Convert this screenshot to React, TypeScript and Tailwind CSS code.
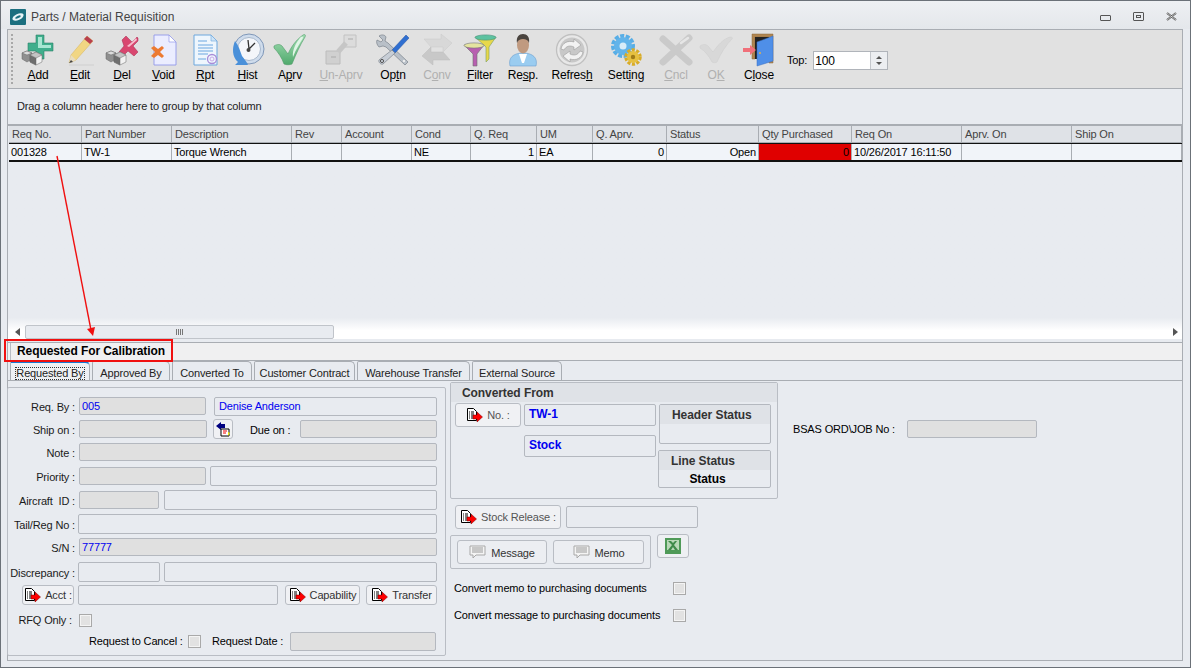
const font = "font-['Liberation_Sans',sans-serif]";

type IconName =
  | 'add' | 'edit' | 'del' | 'void' | 'rpt' | 'hist' | 'aprv' | 'unaprv' | 'optn'
  | 'conv' | 'filter' | 'resp' | 'refresh' | 'setting' | 'cncl' | 'ok' | 'close';

function Blocks() {
  return (
    <g stroke="#666" strokeWidth="0.5">
      <path d="M1 20l5-2 5 2v6l-5 3-5-3z" fill="#8f8f8f" />
      <path d="M1 20l5 2 5-2-5-2z" fill="#dcdcdc" />
      <path d="M9 22l6-3 6 3v7l-6 3-6-3z" fill="#f2f2f2" />
      <path d="M15 25v7l-6-3v-7z" fill="#6e6e6e" />
      <path d="M9 22l6 3 6-3-6-3z" fill="#c4c4c4" />
    </g>
  );
}

function ToolIcon({ name }: { name: IconName }) {
  const common = { width: 34, height: 34, viewBox: '0 0 34 34' };
  switch (name) {
    case 'add':
      return (
        <svg {...common}>
          <path d="M15 2h8v8h9v8h-9v8h-8v-8H7v-8h8z" fill="#3fae8c" stroke="#2b7f68" strokeWidth="0.6" strokeLinejoin="round" />
          <path d="M17 4h4v8h9v3H17z" fill="#a8e6d2" />
          <Blocks />
        </svg>
      );
    case 'edit':
      return (
        <svg {...common}>
          <path d="M24 3l6 5-17 19-7 3 2-8z" fill="#f1d683" stroke="#d4b25c" strokeWidth="0.5" />
          <path d="M24 3l6 5-3 3-6-5z" fill="#b8404f" />
          <path d="M8 22l5 5-7 3z" fill="#e8dcc0" />
          <path d="M6 30l2-3 2 2z" fill="#444" />
          <path d="M6 32h25" stroke="#d4d4d4" strokeWidth="1.5" />
        </svg>
      );
    case 'del':
      return (
        <svg {...common}>
          <path d="M17 7l4-4 6 6 5-5 1 1v3l-5 5 5 6-4 4-6-5-5 5-4-4 5-6z" fill="#d9476f" stroke="#a32b50" strokeWidth="0.5" strokeLinejoin="round" />
          <path d="M27 9l4-4 1 2-8 7-2-1z" fill="#f8bccd" />
          <Blocks />
        </svg>
      );
    case 'void':
      return (
        <svg {...common}>
          <path d="M7 2h15l7 7v23H7z" fill="#ebedff" stroke="#9298ea" strokeWidth="0.9" />
          <path d="M22 2v7h7z" fill="#fff" stroke="#9298ea" strokeWidth="0.7" />
          <path d="M4 15l3-2 4 3 4-3 2 2-4 4 4 4-2 2-4-3-4 3-3-2 4-4z" fill="#ec7a32" />
        </svg>
      );
    case 'rpt':
      return (
        <svg {...common}>
          <path d="M6 2h17l6 6v24H6z" fill="#eef6fd" stroke="#6da7dd" />
          <path d="M23 2v6h6z" fill="#cfe4f7" stroke="#6da7dd" strokeWidth="0.6" />
          <path d="M10 8h9M10 12h15M10 15h15M10 18h15M10 21h10M10 26h8" stroke="#6aa6e0" strokeWidth="1" />
          <circle cx="24" cy="26" r="4.500" fill="none" stroke="#a88cd8" strokeWidth="1.300" />
          <circle cx="24" cy="26" r="2" fill="none" stroke="#c9a8e8" />
        </svg>
      );
    case 'hist':
      return (
        <svg {...common}>
          <circle cx="18" cy="16" r="15" fill="#cfdcec" stroke="#7f97b8" />
          <circle cx="18" cy="16" r="11.500" fill="#f4f6fa" stroke="#a8b8cc" />
          <path d="M18 16l-1-9M18 16l6-6" stroke="#333" strokeWidth="1.300" />
          <circle cx="17.500" cy="17" r="2" fill="#444" />
          <path d="M4 8C1 15 1 24 7 29l-3 3h13c-1-3-3-5-6-9-2-5-3-10-7-15z" fill="#4a90d9" />
        </svg>
      );
    case 'aprv':
      return (
        <svg {...common}>
          <defs>
            <linearGradient id="aprvFill" x1="0" y1="0" x2="0" y2="1">
              <stop offset="0" stopColor="#a6e0b6" />
              <stop offset="1" stopColor="#4fa96c" />
            </linearGradient>
          </defs>
          <path d="M1 13c3-2 6-2 8 0l6 8c3-7 8-14 15-19 2-1 3 0 2 2-5 8-9 17-13 27-2 1-6 1-8 0C9 25 5 19 1 15z" fill="url(#aprvFill)" stroke="#4d9a66" strokeWidth="0.6" />
          <path d="M27 5c1-1 3-2 3 0-3 5-7 11-10 19-1-7 3-14 7-19z" fill="#e0f5e6" />
        </svg>
      );
    case 'unaprv':
      return (
        <svg {...common}>
          <path d="M20 2h12v12H20z" fill="#dcdcdc" stroke="#c2c2c2" />
          <path d="M2 18h14v13H2z" fill="#d0d0d0" stroke="#bcbcbc" />
          <path d="M14 19l8-9" stroke="#c6c6c6" strokeWidth="5" />
          <path d="M24 6h5M7 24h5" stroke="#aaa" />
        </svg>
      );
    case 'optn':
      return (
        <svg {...common}>
          <path d="M3 3c3-2 6-1 7 1l-1 4 3 2 20 19-3 3L10 14l-3-1-4 1c-2-2-3-5-2-7l4 2 2-2z" fill="#b9c0c8" stroke="#6d7680" strokeWidth="0.6" />
          <path d="M30 2l3 3-14 15-3-3z" fill="#2f6fd1" stroke="#1f4fa0" strokeWidth="0.5" />
          <path d="M16 17l3 3-12 11c-2 1-5-2-4-4z" fill="#c8ced6" stroke="#6d7680" strokeWidth="0.6" />
          <circle cx="6" cy="28" r="1.600" fill="none" stroke="#555" />
          <circle cx="28" cy="28" r="1.200" fill="#eee" />
        </svg>
      );
    case 'conv':
      return (
        <svg {...common}>
          <path d="M4 6h17V1l11 9-9 9v-5H11z" fill="#d8d8d8" stroke="#cacaca" strokeWidth="0.5" />
          <path d="M30 27H13v5L2 23l9-9v5h12z" fill="#c8c8c8" stroke="#bdbdbd" strokeWidth="0.5" />
        </svg>
      );
    case 'filter':
      return (
        <svg {...common}>
          <path d="M12 4h21l-7 10v12l-3 3V14z" fill="#e8d84a" stroke="#7aa060" strokeWidth="0.6" />
          <ellipse cx="22.500" cy="4.500" rx="10.500" ry="2.600" fill="#5cc2a0" stroke="#3f8f78" strokeWidth="0.6" />
          <path d="M1 12h20l-7 9v12h-4V21z" fill="#b85fb0" stroke="#6f6f6f" strokeWidth="0.6" />
          <ellipse cx="11" cy="12.500" rx="10" ry="2.600" fill="#e4e4a0" stroke="#777" strokeWidth="0.6" />
        </svg>
      );
    case 'resp':
      return (
        <svg {...common}>
          <path d="M4 33c-2-8 3-13 13-13s15 5 13 13z" fill="#9accf0" stroke="#6ba0d0" strokeWidth="0.6" />
          <path d="M13 21h8l-3 9h-2z" fill="#fff" />
          <ellipse cx="17" cy="12" rx="6" ry="8.500" fill="#c09a80" />
          <path d="M11 10c-1-6 2-9 6-9s7 3 6 9c-1-3-3-4-6-4s-5 1-6 4z" fill="#4a443f" />
        </svg>
      );
    case 'refresh':
      return (
        <svg {...common}>
          <circle cx="17" cy="17" r="15.500" fill="#e8e8e8" stroke="#c0c0c0" strokeWidth="1.300" />
          <circle cx="17" cy="17" r="12.500" fill="#c8c8c8" />
          <path d="M6 16c1-6 7-9 13-7V6l7 6-7 5v-3c-4-2-8-1-10 3z" fill="#f2f2f2" stroke="#909090" strokeWidth="0.5" />
          <path d="M28 19c-1 6-7 9-13 7v3l-7-6 7-5v3c4 2 8 1 10-3z" fill="#f2f2f2" stroke="#909090" strokeWidth="0.5" />
        </svg>
      );
    case 'setting':
      return (
        <svg {...common}>
          <circle cx="14" cy="13" r="10" fill="none" stroke="#58aee6" strokeWidth="4" strokeDasharray="4 1.500" />
          <circle cx="14" cy="13" r="9" fill="#62b4ea" />
          <circle cx="14" cy="13" r="3.500" fill="#d8ecf8" />
          <circle cx="24" cy="24" r="7" fill="none" stroke="#d8ac28" strokeWidth="3.500" strokeDasharray="3 1.500" />
          <circle cx="24" cy="24" r="6" fill="#e6c040" />
          <circle cx="24" cy="24" r="2.200" fill="#a07c18" />
        </svg>
      );
    case 'cncl':
      return (
        <svg {...common}>
          <path d="M4 6l26 23M30 5L4 29" stroke="#cacaca" strokeWidth="7" strokeLinecap="round" fill="none" />
          <path d="M22 10l7-5" stroke="#e6e6e6" strokeWidth="2.500" strokeLinecap="round" fill="none" />
        </svg>
      );
    case 'ok':
      return (
        <svg {...common}>
          <path d="M1 13c3-2 6-2 8 0l5 6c5-7 10-13 17-15 2 0 3 1 2 2-6 6-11 14-15 23-1 1-4 1-5 0C10 23 6 18 1 15z" fill="#d8d8d8" stroke="#cccccc" strokeWidth="0.5" />
        </svg>
      );
    case 'close':
      return (
        <svg {...common}>
          <path d="M10 1h21v29h-4V4H13v22h-3z" fill="#b08550" stroke="#8a6a3c" strokeWidth="0.5" />
          <path d="M13 4h14v22H13z" fill="#222" />
          <path d="M15 9l16-6v25l-16 5z" fill="#4f8fe8" stroke="#3a6fc0" strokeWidth="0.5" />
          <circle cx="18" cy="20" r="1" fill="#e0b050" />
          <path d="M1 15h7v-3l6 5-6 5v-3H1z" fill="#f0707a" />
        </svg>
      );
  }
}

function DocArrow() {
  return (
    <svg width="17" height="17" viewBox="0 0 17 17" className="shrink-0">
      <path d="M1.500 1.500h6l3 3v9h-9z" fill="#fff" stroke="#000" />
      <path d="M3 5h1M5 5h3M3 7h1M5 7h3M3 9h1M5 9h3M3 11h1M5 11h3" stroke="#000" />
      <path d="M7 8h4V5l5.500 5-5.500 5v-3H7z" fill="#f00" stroke="#700" strokeWidth="0.5" />
    </svg>
  );
}

function Bubble() {
  return (
    <svg width="17" height="14" viewBox="0 0 17 14" className="shrink-0">
      <path d="M1 1h15v9H7l-3 3v-3H1z" fill="#f4f4f4" stroke="#a8a8a8" />
      <path d="M3 3h11M3 5h11M3 7h11" stroke="#9a9a9a" />
    </svg>
  );
}

const tools: { name: IconName; pre: string; key: string; post: string; w: string; off?: boolean }[] = [
  { name: 'add', pre: '', key: 'A', post: 'dd', w: 'w-[42px]' },
  { name: 'edit', pre: '', key: 'E', post: 'dit', w: 'w-[42px]' },
  { name: 'del', pre: '', key: 'D', post: 'el', w: 'w-[42px]' },
  { name: 'void', pre: '', key: 'V', post: 'oid', w: 'w-[41px]' },
  { name: 'rpt', pre: '', key: 'R', post: 'pt', w: 'w-[42px]' },
  { name: 'hist', pre: '', key: 'H', post: 'ist', w: 'w-[43px]' },
  { name: 'aprv', pre: 'A', key: 'p', post: 'rv', w: 'w-[42px]' },
  { name: 'unaprv', pre: '', key: 'U', post: 'n-Aprv', w: 'w-[60px]', off: true },
  { name: 'optn', pre: 'Op', key: 't', post: 'n', w: 'w-[44px]' },
  { name: 'conv', pre: 'C', key: 'o', post: 'nv', w: 'w-[44px]', off: true },
  { name: 'filter', pre: '', key: 'F', post: 'ilter', w: 'w-[42px]' },
  { name: 'resp', pre: 'Re', key: 's', post: 'p.', w: 'w-[44px]' },
  { name: 'refresh', pre: 'Refres', key: 'h', post: '', w: 'w-[54px]' },
  { name: 'setting', pre: 'Sett', key: 'i', post: 'ng', w: 'w-[54px]' },
  { name: 'cncl', pre: '', key: 'C', post: 'ncl', w: 'w-[46px]', off: true },
  { name: 'ok', pre: 'O', key: 'K', post: '', w: 'w-[34px]', off: true },
  { name: 'close', pre: 'C', key: 'l', post: 'ose', w: 'w-[52px]' },
];

const columns: { label: string; value: string; w: string; right?: boolean; red?: boolean }[] = [
  { label: 'Req No.', value: '001328', w: 'w-[73px]' },
  { label: 'Part Number', value: 'TW-1', w: 'w-[90px]' },
  { label: 'Description', value: 'Torque Wrench', w: 'w-[120px]' },
  { label: 'Rev', value: '', w: 'w-[50px]' },
  { label: 'Account', value: '', w: 'w-[70px]' },
  { label: 'Cond', value: 'NE', w: 'w-[59px]' },
  { label: 'Q. Req', value: '1', w: 'w-[66px]', right: true },
  { label: 'UM', value: 'EA', w: 'w-[56px]' },
  { label: 'Q. Aprv.', value: '0', w: 'w-[74px]', right: true },
  { label: 'Status', value: 'Open', w: 'w-[92px]', right: true },
  { label: 'Qty Purchased', value: '0', w: 'w-[93px]', right: true, red: true },
  { label: 'Req On', value: '10/26/2017 16:11:50', w: 'w-[110px]' },
  { label: 'Aprv. On', value: '', w: 'w-[110px]' },
  { label: 'Ship On', value: '', w: 'w-[110px]' },
];

const tabs = [
  { label: 'Requested By', w: 'w-[80px]', active: true },
  { label: 'Approved By', w: 'w-[78px]' },
  { label: 'Converted To', w: 'w-[80px]' },
  { label: 'Customer Contract', w: 'w-[101px]' },
  { label: 'Warehouse Transfer', w: 'w-[113px]' },
  { label: 'External Source', w: 'w-[90px]' },
];

// grey = read-only box, otherwise it is outlined only
function Field({ w, h = 'h-[18px]', grey, blue, bold, children }: { w: string; h?: string; grey?: boolean; blue?: boolean; bold?: boolean; children?: React.ReactNode }) {
  return (
    <div
      className={`${w} ${h} shrink-0 border border-[#b4b8bf] rounded-[2px] flex items-center text-[11px] leading-none ${grey ? 'bg-[#e0e0e0] pl-[2px]' : 'bg-[#e8ebf0] pl-1'} ${blue ? 'text-[#0000f0]' : 'text-black'} ${bold ? 'font-bold text-[12px] pb-[2px] tracking-[-0.08px]' : ''}`}
    >
      {children}
    </div>
  );
}

function Label({ children }: { children: React.ReactNode }) {
  return <div className="w-[68px] shrink-0 pt-[3px] pr-[1px] text-right text-[11px] leading-none text-[#1a1a1a] whitespace-nowrap">{children}</div>;
}

function IconButton({ w, h = 'h-[22px]', label, grey }: { w: string; h?: string; label: string; grey?: boolean }) {
  return (
    <div className={`${w} ${h} shrink-0 flex items-center justify-center gap-1 rounded-[3px] border border-[#b9bdc4] bg-[#f0f1f4] text-[11px] leading-none ${grey ? 'text-[#555]' : 'text-[#333]'}`}>
      <DocArrow />
      <span className="whitespace-nowrap">{label}</span>
    </div>
  );
}

function Check() {
  return (
    <div className="w-[13px] h-[13px] shrink-0 border border-[#a9a9a9] p-[1px] bg-[#f4f4f4]">
      <div className="w-full h-full bg-[#e2e2e2]" />
    </div>
  );
}

function LeftForm() {
  return (
    <div className="w-[439px] h-[269px] -ml-[1px] mt-[6px] border border-[#b9bdc4] rounded-[2px] pt-[8px] shrink-0">
      <div className="flex items-center h-[20px]">
        <Label>Req. By :</Label>
        <div className="ml-[3px]"><Field w="w-[127px]" grey blue>005</Field></div>
        <div className="ml-2"><Field w="w-[223px]" h="h-[19px]" blue>Denise Anderson</Field></div>
      </div>
      <div className="flex items-center h-[20px] mt-[3px]">
        <Label>Ship on :</Label>
        <div className="ml-[3px]"><Field w="w-[128px]" grey /></div>
        <div className="ml-[6px] w-[20px] h-[20px] border border-[#b9bdc4] rounded-[3px] bg-[#f0f1f4] flex items-center justify-center">
          <svg width="16" height="16" viewBox="0 0 16 16">
            <path d="M1 5l5-4v2h4v4H6v2z" fill="#000080" />
            <path d="M6 8h8v7H6z" fill="#fff" stroke="#000" />
            <path d="M8 10h4M8 12h3" stroke="#e00" />
            <path d="M13 11l2 1-2 3z" fill="#ee0" />
          </svg>
        </div>
        <div className="ml-[17px] w-[41px] pt-[3px] text-[11px] leading-none whitespace-nowrap">Due on :</div>
        <div className="ml-[9px]"><Field w="w-[137px]" grey /></div>
      </div>
      <div className="flex items-center h-[20px] mt-[3px]">
        <Label>Note :</Label>
        <div className="ml-[3px]"><Field w="w-[358px]" grey /></div>
      </div>
      <div className="flex items-center h-[20px] mt-[4px]">
        <Label>Priority :</Label>
        <div className="ml-[3px]"><Field w="w-[127px]" grey /></div>
        <div className="ml-1"><Field w="w-[227px]" h="h-[20px]" /></div>
      </div>
      <div className="flex items-center h-[20px] mt-[4px]">
        <Label>Aircraft&nbsp; ID :</Label>
        <div className="ml-[3px]"><Field w="w-[80px]" grey /></div>
        <div className="ml-[5px]"><Field w="w-[273px]" h="h-[20px]" /></div>
      </div>
      <div className="flex items-center h-[20px] mt-[4px]">
        <Label>Tail/Reg No :</Label>
        <div className="ml-[2px]"><Field w="w-[359px]" h="h-[20px]" /></div>
      </div>
      <div className="flex items-center h-[20px] mt-[3px]">
        <Label>S/N :</Label>
        <div className="ml-[3px]"><Field w="w-[358px]" grey blue>77777</Field></div>
      </div>
      <div className="flex items-center h-[20px] mt-[5px]">
        <Label>Discrepancy :</Label>
        <div className="ml-[2px]"><Field w="w-[82px]" h="h-[20px]" /></div>
        <div className="ml-1"><Field w="w-[273px]" h="h-[20px]" /></div>
      </div>
      <div className="flex items-center h-[20px] mt-[3px]">
        <div className="ml-[14px]"><IconButton w="w-[52px]" h="h-[20px]" label="Acct :" /></div>
        <div className="ml-1"><Field w="w-[200px]" h="h-[20px]" /></div>
        <div className="ml-[7px]"><IconButton w="w-[75px]" h="h-[20px]" label="Capability" /></div>
        <div className="ml-[6px]"><IconButton w="w-[71px]" h="h-[20px]" label="Transfer" /></div>
      </div>
      <div className="flex items-center h-[14px] mt-[8px]">
        <div className="w-[65px] pr-[1px] text-right text-[11px] leading-none text-[#1a1a1a] whitespace-nowrap">RFQ Only :</div>
        <div className="ml-[6px]"><Check /></div>
      </div>
      <div className="flex items-center h-[20px] mt-[4px]">
        <div className="ml-[81px] w-[94px] text-[11px] leading-none whitespace-nowrap">Request to Cancel :</div>
        <div className="ml-[5px]"><Check /></div>
        <div className="ml-[11px] w-[72px] text-[11px] leading-none whitespace-nowrap">Request Date :</div>
        <div className="ml-[6px]"><Field w="w-[146px]" h="h-[19px]" grey /></div>
      </div>
    </div>
  );
}

function StatusBox({ title, value, w, h }: { title: string; value?: string; w: string; h: string }) {
  return (
    <div className={`${w} ${h} border border-[#b4b8bf] rounded-[2px] overflow-hidden`}>
      <div className="h-[19px] bg-[#dfe2e7] flex items-center pl-3 text-[12px] font-bold text-[#333] leading-none tracking-[-0.08px]">{title}</div>
      <div className="text-center pr-[14px] text-[12px] font-bold leading-[18px] tracking-[-0.08px]">{value}</div>
    </div>
  );
}

function CenterForm() {
  return (
    <div className="w-[328px] ml-1 mt-[1px] shrink-0">
      <div className="h-[117px] border border-[#b9bdc4] rounded-[2px]">
        <div className="h-[19px] bg-[#dfe2e7] px-[11px] flex items-center text-[12px] font-bold text-[#333] leading-none tracking-[-0.08px]">Converted From</div>
        <div className="flex">
          <div className="ml-1 mt-[1px]"><IconButton w="w-[66px]" h="h-[24px]" label="No. :" grey /></div>
          <div className="ml-[3px] mt-[2px] flex flex-col gap-[9px]">
            <Field w="w-[132px]" h="h-[22px]" blue bold>TW-1</Field>
            <Field w="w-[132px]" h="h-[22px]" blue bold>Stock</Field>
          </div>
          <div className="ml-[2px] mt-[2px] flex flex-col items-end gap-[6px] w-[113px]">
            <StatusBox title="Header Status" w="w-[112px]" h="h-[40px]" />
            <StatusBox title="Line Status" value="Status" w="w-[113px]" h="h-[38px]" />
          </div>
        </div>
      </div>
      <div className="flex items-center mt-[6px] ml-[5px]">
        <IconButton w="w-[106px]" h="h-[24px]" label="Stock Release :" grey />
        <div className="ml-[5px]"><Field w="w-[132px]" h="h-[22px]" /></div>
      </div>
      <div className="flex items-start mt-[6px]">
        <div className="w-[201px] h-[34px] border border-[#b9bdc4] rounded-[2px] flex items-center gap-[6px] pl-[6px]">
          <div className="w-[90px] h-[24px] border border-[#b9bdc4] rounded-[3px] bg-[#eceef2] flex items-center justify-center gap-[5px] text-[11px] text-[#333] leading-none"><Bubble /><span className="pt-[3px]">Message</span></div>
          <div className="w-[91px] h-[24px] border border-[#b9bdc4] rounded-[3px] bg-[#eceef2] flex items-center justify-center gap-[5px] text-[11px] text-[#333] leading-none"><Bubble /><span className="pt-[3px]">Memo</span></div>
        </div>
        <div className="ml-[6px] -mt-[1px] w-[32px] h-[24px] border border-[#b9bdc4] rounded-[3px] bg-[#eef0f3] flex items-center justify-center">
          <svg width="16" height="16" viewBox="0 0 16 16">
            <rect width="16" height="16" fill="#4f9a58" />
            <rect x="2" y="2" width="12" height="10" fill="#b9d8b8" />
            <path d="M3 3l4 4-4 5h3l2-3 2 3h3L9 7l3-4h-2L8 5 6 3z" fill="#3f8a4a" />
          </svg>
        </div>
      </div>
      <div className="flex items-center h-[14px] mt-[12px]">
        <div className="w-[223px] pl-1 text-[11px] leading-none whitespace-nowrap">Convert memo to purchasing documents</div>
        <Check />
      </div>
      <div className="flex items-center h-[14px] mt-[13px]">
        <div className="w-[223px] pl-1 text-[11px] leading-none whitespace-nowrap">Convert message to purchasing documents</div>
        <Check />
      </div>
    </div>
  );
}

export default function App() {
  return (
    <div className={`relative w-[1191px] h-[668px] overflow-hidden bg-[#e8ebf0] border border-[#6b7178] flex flex-col text-[11px] text-black tracking-[-0.15px] ${font}`}>
      {/* title bar */}
      <div className="h-[28px] shrink-0 flex items-center bg-gradient-to-b from-[#eef0f3] to-[#e4e7eb] pt-[3px] pl-[9px] pr-[13px]">
        <svg width="16" height="16" viewBox="0 0 16 16">
          <rect width="16" height="16" rx="1" fill="#1b6f80" />
          <ellipse cx="8" cy="8" rx="6" ry="3" fill="#e8f4f8" transform="rotate(-25 8 8)" />
          <ellipse cx="8" cy="8" rx="3" ry="1.200" fill="#1b6f80" transform="rotate(-25 8 8)" />
        </svg>
        <span className="ml-[5px] text-[12px] leading-none text-[#444] tracking-normal">Parts / Material Requisition</span>
        <div className="ml-auto flex items-center gap-[22px]">
          <div className="w-[11px] h-[6px] border border-[#555] rounded-[1px] mt-[3px]" />
          <div className="w-[11px] h-[9px] border border-[#555] rounded-[1px] flex items-center justify-center">
            <div className="w-[5px] h-[3px] border border-[#555]" />
          </div>
          <svg width="11" height="9" viewBox="0 0 11 9">
            <path d="M1 1l9 7M10 1L1 8" stroke="#555" strokeWidth="2" fill="none" />
            <path d="M1 1l9 7M10 1L1 8" stroke="#fff" strokeWidth="0.6" fill="none" />
          </svg>
        </div>
      </div>

      {/* main frame */}
      <div className="flex-1 min-h-0 ml-[6px] mr-[7px] mb-[6px] border border-[#a9adb3] flex flex-col">
        {/* toolbar */}
        <div className="h-[59px] shrink-0 bg-[#e1e1e1] border-b border-[#a9adb3] flex items-start">
          <div className="w-[2px] h-[50px] mt-[4px] ml-[3px] mr-[4px] border-l-2 border-dotted border-[#a8a8a8]" />
          {tools.map((t) => (
            <div key={t.name} className={`${t.w} shrink-0 flex flex-col items-center pt-[3px]`}>
              <ToolIcon name={t.name} />
              <div className={`mt-[1px] text-[12px] leading-[14px] whitespace-nowrap ${t.off ? 'text-[#b0b0b0]' : 'text-black'}`}>
                {t.pre}<span className="underline">{t.key}</span>{t.post}
              </div>
            </div>
          ))}
          <div className="ml-[2px] mt-[21px] flex items-center">
            <span className="text-[11px] leading-none">Top:</span>
            <div className="ml-[6px] w-[75px] h-[19px] border border-[#b0b4ba] bg-white flex items-center">
              <span className="flex-1 pl-[1px] text-[12px] leading-none">100</span>
              <div className="w-[17px] h-full bg-[#eceef1] border-l border-[#c4c7cc] flex flex-col items-center justify-center gap-[3px]">
                <div className="w-0 h-0 border-x-[3px] border-x-transparent border-b-[3px] border-b-[#555]" />
                <div className="w-0 h-0 border-x-[3px] border-x-transparent border-t-[3px] border-t-[#555]" />
              </div>
            </div>
          </div>
        </div>

        {/* group-by hint */}
        <div className="h-[35px] shrink-0 flex items-center pl-[9px] text-[11px] leading-none text-[#222]">
          Drag a column header here to group by that column
        </div>

        {/* grid */}
        <div className="h-[215px] shrink-0 border-t-2 border-[#a9adb3] pl-[1px] flex flex-col bg-gradient-to-b from-[#e8ebf0] from-90% to-white to-96%">
          <div className="h-[17px] shrink-0 flex bg-[#dfe2e7] border-b border-[#a9adb3]">
            {columns.map((c) => (
              <div key={c.label} className={`${c.w} shrink-0 border-r border-[#a9adb3] pl-[3px] flex items-center text-[11px] leading-none text-[#444] whitespace-nowrap`}>
                {c.label}
              </div>
            ))}
          </div>
          <div className="h-[19px] shrink-0 flex border-b-2 border-t border-[#111] bg-[#f1f4f9]">
            {columns.map((c) => (
              <div
                key={c.label}
                className={`${c.w} shrink-0 border-r border-[#a9adb3] px-[2px] flex items-center text-[11px] leading-none text-black whitespace-nowrap ${c.right ? 'justify-end' : ''} ${c.red ? 'bg-[#e00000]' : ''}`}
              >
                {c.value}
              </div>
            ))}
          </div>
          <div className="flex-1" />
          {/* horizontal scrollbar */}
          <div className="h-[15px] shrink-0 flex items-center">
            <div className="w-0 h-0 ml-[6px] border-y-[4px] border-y-transparent border-r-[5px] border-r-[#555]" />
            <div className="ml-[5px] w-[309px] h-[14px] bg-[#e8ebf0] border border-[#c0c4ca] rounded-[2px] flex items-center justify-center gap-[1px]">
              <div className="w-[1px] h-[6px] bg-[#777]" />
              <div className="w-[1px] h-[6px] bg-[#777]" />
              <div className="w-[1px] h-[6px] bg-[#777]" />
              <div className="w-[1px] h-[6px] bg-[#777]" />
            </div>
            <div className="w-0 h-0 ml-auto mr-[4px] border-y-[4px] border-y-transparent border-l-[5px] border-l-[#555]" />
          </div>
        </div>

        {/* calibration strip */}
        <div className="h-[19px] shrink-0 mt-[3px] bg-[#f0f0f1] border-y border-[#a9adb3] pl-[2px] text-[12px] font-bold leading-none tracking-[-0.08px]">
          <div className="h-full border-l border-[#b9bdc4] pl-[6px] pb-[2px] flex items-center">Requested For Calibration</div>
        </div>

        {/* tabs */}
        <div className="h-[20px] shrink-0 flex items-end gap-[2px] border-b border-[#a9adb3] pl-[2px]">
          {tabs.map((t) => (
            <div
              key={t.label}
              className={`${t.w} h-[19px] pt-[4px] shrink-0 border border-b-0 border-[#a9adb3] rounded-tl-[2px] rounded-tr-[5px] flex items-center justify-center text-[11px] leading-none text-[#222] whitespace-nowrap ${t.active ? 'bg-[#eef0f4] border-t-2 border-t-[#1878d0]' : 'bg-[#e8ebf0]'}`}
            >
              <span className={t.active ? 'outline-1 outline-dotted outline-[#333]' : ''}>{t.label}</span>
            </div>
          ))}
        </div>

        {/* tab page */}
        <div className="flex-1 min-h-0 flex">
          <LeftForm />
          <CenterForm />
          <div className="flex items-center h-[18px] mt-[39px] ml-[15px] shrink-0">
            <span className="w-[114px] text-[11px] leading-none whitespace-nowrap">BSAS ORD\JOB No :</span>
            <Field w="w-[130px]" grey />
          </div>
        </div>
      </div>

      {/* red callout over the grid */}
      <svg className="absolute -left-[1px] -top-[1px] pointer-events-none" width="180" height="370" viewBox="0 0 180 370">
        <path d="M57 156L91 330" stroke="#f01010" strokeWidth="1.400" fill="none" />
        <path d="M87 329l8-2-2 9z" fill="#f01010" />
        <rect x="5" y="340" width="167" height="21" fill="none" stroke="#f01010" strokeWidth="2" />
      </svg>
    </div>
  );
}
